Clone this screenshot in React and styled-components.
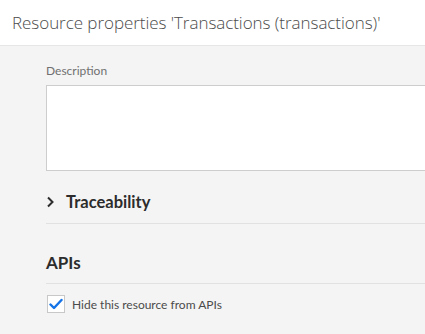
import React from "react";
import styled, { createGlobalStyle } from "styled-components";

const Global = createGlobalStyle`
  html, body { margin: 0; padding: 0; background: #f4f4f4; overflow: hidden; }
  body { font-family: Lato, "Liberation Sans", sans-serif; }
  #root { width: 425px; height: 334px; overflow: hidden; }
`;

const Page = styled.div`
  display: flex;
  flex-direction: column;
  width: 425px;
  height: 334px;
  background: #f4f4f4;
`;

const Header = styled.header`
  height: 46px;
  box-sizing: border-box;
  background: #fff;
  border-bottom: 1px solid #e6e6e6;
  display: flex;
  align-items: center;
  padding-left: 12px;
`;

const Title = styled.h1`
  margin: 0;
  font-family: "Open Sans", sans-serif;
  font-size: 17px;
  font-weight: 300;
  color: #4b4b4b;
  white-space: nowrap;
  letter-spacing: -0.05px;
`;

const Body = styled.div`
  padding: 17px 0 0 46px;
  width: 460px;
  display: flex;
  flex-direction: column;
`;

const Label = styled.label`
  font-size: 12px;
  color: #707070;
  line-height: 16px;
  margin-bottom: 6px;
`;

const TextArea = styled.div`
  height: 86px;
  box-sizing: border-box;
  background: #fff;
  border: 1px solid #cdcdcd;
`;

const Section = styled.div`
  display: flex;
  align-items: center;
  gap: ${(p) => (p.$chevron ? "11px" : "0")};
  height: ${(p) => p.$h}px;
  padding-top: ${(p) => p.$pt}px;
  box-sizing: border-box;
  border-bottom: 1px solid #e1e1e1;
`;

const Heading = styled.h2`
  margin: 0;
  font-size: ${(p) => p.$size || 16}px;
  font-weight: 700;
  color: #2c2c2c;
  white-space: nowrap;
`;

const CheckRow = styled.label`
  display: flex;
  align-items: center;
  gap: 7px;
  margin-top: 11px;
  font-size: 12px;
  color: #4b4b4b;
`;

const Box = styled.span`
  width: 18px;
  height: 18px;
  box-sizing: border-box;
  border: 1px solid #c8c8c8;
  background: #fff;
  display: flex;
  align-items: center;
  justify-content: center;
  margin-left: 1px;
`;

const Chevron = () => (
  <svg width="9" height="12" viewBox="0 0 9 12">
    <path d="M2 1.5 L6.5 6 L2 10.5" fill="none" stroke="#2c2c2c" strokeWidth="2" />
  </svg>
);

const Check = () => (
  <svg width="14" height="12" viewBox="0 0 14 12">
    <path d="M1.5 6.5 L5 10 L12.5 2" fill="none" stroke="#1473e6" strokeWidth="2.4" strokeLinecap="round" strokeLinejoin="round" />
  </svg>
);

export default function App() {
  return (
    <Page>
      <Global />
      <Header>
        <Title>Resource properties 'Transactions (transactions)'</Title>
      </Header>
      <Body>
        <Label>Description</Label>
        <TextArea />
        <Section $h={53} $pt={10} $chevron>
          <Chevron />
          <Heading $size={16.5}>Traceability</Heading>
        </Section>
        <Section $h={60} $pt={18}>
          <Heading $size={17}>APIs</Heading>
        </Section>
        <CheckRow>
          <Box>
            <Check />
          </Box>
          Hide this resource from APIs
        </CheckRow>
      </Body>
    </Page>
  );
}
